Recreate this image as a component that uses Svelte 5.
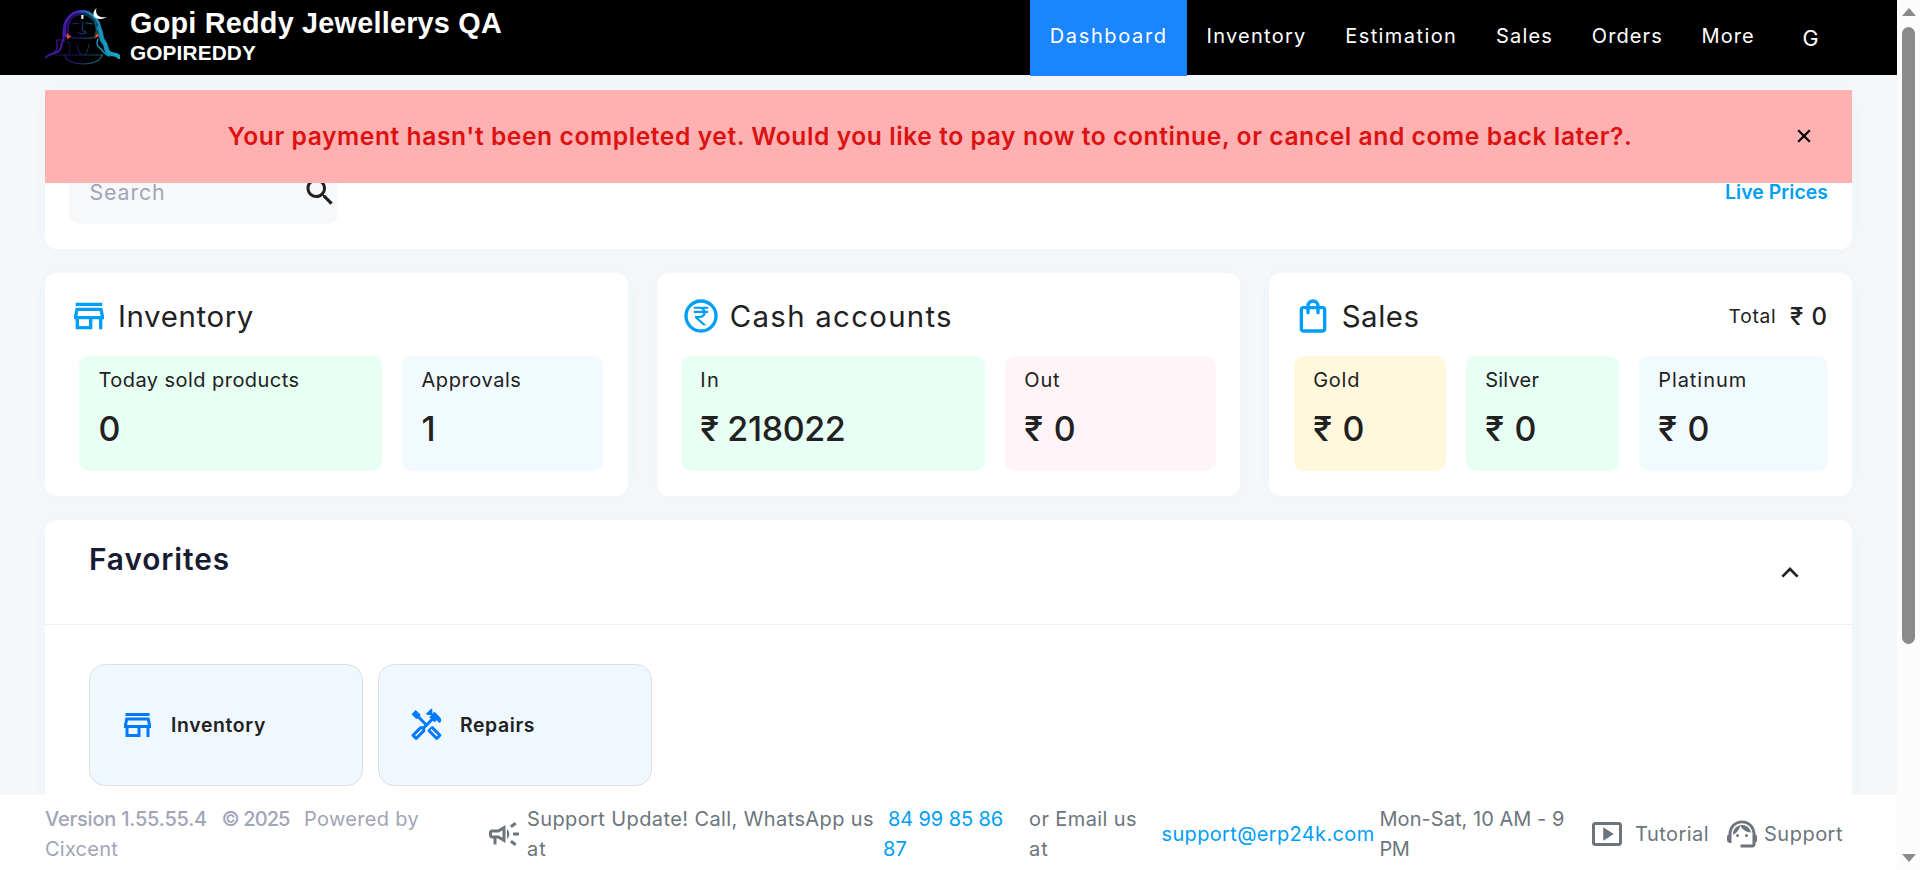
<script>
  const STORE = 'M18.36 9l.6 3H5.04l.6-3h12.72M20 4H4v2h16V4zm0 3H4l-1 5v2h1v6h10v-6h4v6h2v-6h1v-2l-1-5zM6 18v-4h6v4H6z';
  const BAG = 'M18 6h-2c0-2.21-1.79-4-4-4S8 3.79 8 6H6c-1.1 0-2 .9-2 2v12c0 1.1.9 2 2 2h12c1.1 0 2-.9 2-2V8c0-1.1-.9-2-2-2zm-6-2c1.1 0 2 .9 2 2h-4c0-1.1.9-2 2-2zm6 16H6V8h2v2c0 .55.45 1 1 1s1-.45 1-1V8h4v2c0 .55.45 1 1 1s1-.45 1-1V8h2v12z';
  const TOOLS = 'm21.67 18.17-5.3-5.3h-.99l-2.54 2.54v.99l5.3 5.3c.39.39 1.02.39 1.41 0l2.12-2.12c.39-.38.39-1.02 0-1.41zm-2.83 1.42-4.24-4.24.71-.71 4.24 4.24-.71.71zM17.34 10.19l1.41-1.41 2.12 2.12c1.17-1.17 1.17-3.07 0-4.24l-3.54-3.54-1.41 1.41V1.71L15.22 1l-3.54 3.54.71.71h2.83l-1.41 1.41 1.06 1.06-2.89 2.89-4.13-4.13V5.06L4.83 2.04 2 4.87 5.03 7.9h1.41l4.13 4.13-.85.85H7.6l-5.3 5.3c-.39.39-.39 1.02 0 1.41l2.12 2.12c.39.39 1.02.39 1.41 0l5.3-5.3v-2.12l5.15-5.15 1.06 1.05zm-7.98 5.15-4.24 4.24-.71-.71 4.24-4.24.71.71z';
  const RUPEE = 'M13.66 7c-.56-1.18-1.76-2-3.16-2H6V3h12v2h-3.26c.48.58.84 1.26 1.05 2H18v2h-2.02c-.25 2.8-2.61 5-5.48 5h-.73l6.73 7h-2.77L7 14v-2h3.5c1.76 0 3.22-1.3 3.46-3H6V7h7.66z';

  const nav = [
    ['Dashboard', 118],
    ['Inventory', 100],
    ['Estimation', 112],
    ['Sales', 57],
    ['Orders', 71],
    ['More', 53]
  ];

  const cards = [
    {
      icon: 'store', title: 'Inventory', tw: 136, kind: 'inv',
      tiles: [
        { label: 'Today sold products', lw: 201, value: '0', vw: 22, tone: 'green' },
        { label: 'Approvals', lw: 100, value: '1', vw: 15, tone: 'blue' }
      ]
    },
    {
      icon: 'rupee', title: 'Cash accounts', tw: 223, kind: 'cash',
      tiles: [
        { label: 'In', lw: 20, value: '₹ 218022', vw: 145, tone: 'green' },
        { label: 'Out', lw: 36, value: '₹ 0', vw: 52, tone: 'pink' }
      ]
    },
    {
      icon: 'bag', title: 'Sales', tw: 78, kind: 'sales', total: '₹ 0',
      tiles: [
        { label: 'Gold', lw: 47, value: '₹ 0', vw: 52, tone: 'gold' },
        { label: 'Silver', lw: 54, value: '₹ 0', vw: 52, tone: 'green' },
        { label: 'Platinum', lw: 89, value: '₹ 0', vw: 52, tone: 'blue' }
      ]
    }
  ];

  // Tracks a label out so that it fills its designed width.
  function fit(node, width) {
    const n = node.textContent.length;
    const natural = node.getBoundingClientRect().width;
    if (width && n) node.style.letterSpacing = ((width - natural) / n).toFixed(3) + 'px';
  }
</script>

{#snippet t(text, width)}<span class="t" use:fit={width}>{text}</span>{/snippet}

<div class="window">
  <div class="main">
    <header>
      <svg class="logo" viewBox="0 0 75 57" fill="none" stroke-linecap="round">
        <defs>
          <linearGradient id="lg" x1="0" x2="75" y1="0" y2="0" gradientUnits="userSpaceOnUse">
            <stop offset="0" stop-color="#46128a" />
            <stop offset=".4" stop-color="#4420b8" />
            <stop offset=".62" stop-color="#1689b8" />
            <stop offset="1" stop-color="#18a7c6" />
          </linearGradient>
        </defs>
        <g stroke="url(#lg)">
          <g opacity=".45" stroke-width="5">
            <path d="M21 27C19 20 22 12 27 8C32 4 42 4 46 8C53 13 54 19 54 27" />
            <path d="M55 23C58 28 55 32 60 37C63 41 61 44 66 46" />
          </g>
          <path stroke-width="2.6" d="M21 28C17 22 20 12 26 7C32 2 42 2 47 7C54 12 56 19 55 27" />
          <path stroke-width="2" d="M19 22C17 27 20 29 18 33C15 37 18 42 12 44C8 46 4 46 1 49" />
          <path stroke-width="1.2" d="M19 32H12V41L8 46" />
          <path stroke-width="4" d="M54 20C58 26 54 29 59 34C63 38 59 42 64 45C68 48 71 45 74 49" />
          <path stroke-width="1.5" d="M53 31C50 38 54 39 57 42C59 46 61 46 64 48" />
          <path stroke-width="1" opacity=".7" d="M24 14C23 20 23 28 28 30H47C52 28 52 20 50 14M27 16l7-1M41 15l7 1M38 14l-1 8 4 2M33 25q4 2 8 0" />
          <path stroke-width="1" opacity=".5" d="M19 34h5l1 6-1 7M32 37q1 6 4 10M44 37q-1 6-4 10M10 47H58" />
          <path stroke-width="1.2" opacity=".7" d="M20 47C21 59 55 59 57 47" />
        </g>
        <path fill="#f2501c" d="M22 25l4 4-4 2zM52 25l2 3-5 3z" />
        <path fill="#fff" d="M36.4 7h2v4h-2zM51.5 0C44 7 51 15 62 9C55 10.500 49.500 7 51.500 0z" />
      </svg>
      <div class="brand">
        <strong>{@render t('Gopi Reddy Jewellerys QA', 372)}</strong>
        <small>{@render t('GOPIREDDY', 126)}</small>
      </div>
      <nav>
        {#each nav as [name, w], i}
          <a class:active={i === 0}>{@render t(name, w)}</a>
        {/each}
        <a class="user">G</a>
      </nav>
    </header>

    <div class="content">
      <div class="alert">
        <p>{@render t("Your payment hasn't been completed yet. Would you like to pay now to continue, or cancel and come back later?.", 1405)}</p>
        <svg class="close" viewBox="0 0 14 14"><path d="M1.2 1.2l11.6 11.6M12.8 1.2L1.2 12.8" stroke="#000" stroke-width="2.2" /></svg>
      </div>

      <section class="card toolbar">
        <div class="search">
          <span>{@render t('Search', 76)}</span>
          <svg viewBox="0 0 24 24"><path d="M15.5 14h-.79l-.28-.27C15.41 12.59 16 11.11 16 9.5 16 5.91 13.09 3 9.5 3S3 5.91 3 9.5 5.91 16 9.5 16c1.61 0 3.09-.59 4.23-1.57l.27.28v.79l5 4.99L20.49 19l-4.99-5zm-6 0C7.01 14 5 11.99 5 9.5S7.01 5 9.5 5 14 7.01 14 9.5 11.99 14 9.5 14z" /></svg>
        </div>
        <a class="live">{@render t('Live Prices', 103)}</a>
      </section>

      <div class="cards">
        {#each cards as card}
          <section class="card stat {card.kind}">
            <div class="head">
              <svg viewBox="0 0 24 24">
                {#if card.icon === 'store'}
                  <path d={STORE} />
                {:else if card.icon === 'bag'}
                  <path d={BAG} />
                {:else}
                  <circle cx="12" cy="12" r="9" fill="none" stroke="currentColor" stroke-width="2" />
                  <path transform="translate(3.36 4.56) scale(.72 .62)" d={RUPEE} />
                {/if}
              </svg>
              <h2>{@render t(card.title, card.tw)}</h2>
              {#if card.total}
                <div class="total"><span>{@render t('Total', 48)}</span><b>{@render t(card.total, 38)}</b></div>
              {/if}
            </div>
            <div class="tiles">
              {#each card.tiles as tile}
                <div class="tile {tile.tone}">
                  <span>{@render t(tile.label, tile.lw)}</span>
                  <b>{@render t(tile.value, tile.vw)}</b>
                </div>
              {/each}
            </div>
          </section>
        {/each}
      </div>

      <section class="card favorites">
        <div class="fav-head">
          <h3>{@render t('Favorites', 141)}</h3>
          <svg viewBox="0 0 18 11"><path d="M1.4 9.6L9 2l7.6 7.6" fill="none" stroke="#212121" stroke-width="2.7" /></svg>
        </div>
        <div class="shortcuts">
          <a><svg viewBox="0 0 24 24"><path d={STORE} /></svg>{@render t('Inventory', 95)}</a>
          <a><svg viewBox="0 0 24 24"><path d={TOOLS} /></svg>{@render t('Repairs', 75)}</a>
        </div>
      </section>
    </div>

    <footer>
      <div class="version">
        <div><b>{@render t('Version 1.55.55.4', 162)}</b><b>{@render t('© 2025', 68)}</b><span>{@render t('Powered by', 115)}</span></div>
        <div>{@render t('Cixcent', 73)}</div>
      </div>
      <svg class="horn" viewBox="0 0 24 24"><path d="M18 11v2h4v-2h-4zm-2 6.61c.96.71 2.21 1.65 3.2 2.39.4-.53.8-1.07 1.2-1.6-.99-.74-2.24-1.68-3.2-2.4-.4.54-.8 1.08-1.2 1.61zM20.4 5.6c-.4-.53-.8-1.07-1.2-1.6-.99.74-2.24 1.68-3.2 2.4.4.53.8 1.07 1.2 1.6.96-.72 2.21-1.65 3.2-2.4zM4 9c-1.1 0-2 .9-2 2v2c0 1.1.9 2 2 2h1v4h2v-4h1l5 3V6L8 9H4zm5.03 1.71L11 9.53v4.94l-1.97-1.18-.48-.29H4v-2h4.55l.48-.29zM15.5 12c0-1.33-.58-2.53-1.5-3.35v6.69c.92-.81 1.5-2.01 1.5-3.34z" /></svg>
      <div class="update"><div>{@render t('Support Update! Call, WhatsApp us', 347)}</div><div>{@render t('at', 20)}</div></div>
      <div class="phone"><div>{@render t('84 99 85 86', 115)}</div><div>{@render t('87', 24)}</div></div>
      <div class="or"><div>{@render t('or Email us', 108)}</div><div>{@render t('at', 20)}</div></div>
      <div class="mail">{@render t('support@erp24k.com', 213)}</div>
      <div class="hours"><div>{@render t('Mon-Sat, 10 AM - 9', 185)}</div><div>{@render t('PM', 30)}</div></div>
      <svg class="play" viewBox="0 0 24 24"><path d="M9.5 7.5v9l7-4.5zM20 4H4c-1.1 0-2 .9-2 2v12c0 1.1.9 2 2 2h16c1.1 0 2-.9 2-2V6c0-1.1-.9-2-2-2zm0 14.01H4V5.99h16v12.02z" /></svg>
      <div class="tutorial">{@render t('Tutorial', 74)}</div>
      <svg class="agent" viewBox="0 0 24 24"><path d="M21 12.22C21 6.73 16.74 3 12 3c-4.69 0-9 3.65-9 9.28-.6.34-1 .98-1 1.72v2c0 1.1.9 2 2 2h1v-6.1c0-3.87 3.13-7 7-7s7 3.13 7 7V19h-8v2h8c1.1 0 2-.9 2-2v-1.22c.59-.31 1-.92 1-1.64v-2.3c0-.7-.41-1.31-1-1.62z" /><circle cx="9" cy="13" r="1" /><circle cx="15" cy="13" r="1" /><path d="M18 11.03C17.52 8.18 15.04 6 12.05 6c-3.03 0-6.29 2.51-6.03 6.45 2.47-1.01 4.33-3.21 4.86-5.89 1.31 2.63 4 4.44 7.12 4.47z" /></svg>
      <div class="support">{@render t('Support', 79)}</div>
    </footer>
  </div>

  <div class="scrollbar">
    <i class="up"></i>
    <i class="thumb"></i>
    <i class="down"></i>
  </div>
</div>

<style>
  :global(body) { margin: 0; overflow: hidden; }
  * { box-sizing: border-box; }
  .window { display: flex; width: 1920px; height: 870px; overflow: hidden; font: 400 20px/30px Inter, 'Open Sans', sans-serif; color: #212121; }
  .main { position: relative; width: 1897px; height: 870px; overflow: hidden; background: #f4f8fb; }
  .t { display: inline-block; white-space: nowrap; }
  svg { display: block; flex: none; fill: currentColor; }
  h2, h3, p { margin: 0; }

  header { display: flex; height: 75px; padding-left: 45px; background: #000; color: #fff; }
  .logo { width: 75px; height: 57px; margin-top: 8px; fill: none; }
  .brand { display: flex; flex-direction: column; margin-left: 10px; padding-top: 7px; font-family: 'Liberation Sans', Arial, sans-serif; }
  .brand strong { font-size: 28.8px; line-height: 32px; }
  .brand small { font-size: 20.8px; line-height: 27px; font-weight: 700; }
  nav { display: flex; margin-left: auto; margin-right: 56px; }
  nav a { height: 76px; padding: 0 19.4px; line-height: 73px; }
  nav a.active { background: #1b84ff; }
  nav a.user { width: 67px; padding: 0 0 0 28.5px; line-height: 77px; font-size: 21.5px; }

  .content { position: relative; padding: 15px 45px 0; }
  .alert { position: absolute; z-index: 2; top: 15px; left: 45px; display: flex; align-items: center; width: 1807px; height: 93px; padding-left: 182.5px; background: #ffb0b0; color: #dc1212; }
  .alert p { margin-bottom: 1px; font-size: 24.6px; font-weight: 600; }
  .alert .close { width: 14px; height: 14px; margin-left: auto; margin-right: 41px; margin-bottom: 1px; }

  .card { background: #fff; border-radius: 12px; box-shadow: 0 0 20px rgba(76, 87, 125, .03); }
  .toolbar { display: flex; align-items: flex-end; justify-content: space-between; height: 159px; padding: 0 24px 25px; }
  .search { display: flex; align-items: center; justify-content: space-between; width: 269px; height: 62px; padding: 0 0 0 20.5px; border-radius: 10px; background: #f6f8fa; }
  .search span { margin-bottom: 1px; color: #a1a5b7; font-size: 21.4px; }
  .search svg { width: 36px; height: 36px; margin-bottom: 2px; }
  .live { color: #009ef7; font-weight: 600; padding-bottom: 17px; font-size: 19.4px; }

  .cards { display: grid; grid-template-columns: repeat(3, 1fr); gap: 28.5px; margin: 24px 0; }
  .stat { height: 223px; padding: 23px 24px 0; }
  .head { display: flex; align-items: center; height: 40px; }
  .head svg { width: 40px; height: 40px; color: #009ef7; }
  .head h2 { margin-left: 9px; padding-top: 2px; font-size: 29.4px; font-weight: 400; line-height: 38px; }
  .total { display: flex; align-items: center; gap: 13.5px; margin-left: auto; font-size: 19.2px; }
  .total b { padding-top: 1px; font-size: 24px; font-weight: 500; }
  .tiles { display: grid; column-gap: 20px; margin-top: 20px; }
  .inv .tiles { grid-template-columns: 303px 201px; margin-left: 10px; }
  .cash .tiles { grid-template-columns: 304px 211px; }
  .sales .tiles { grid-template-columns: 152px 153px 189px; margin-left: 1px; }
  .tile { display: flex; flex-direction: column; height: 115px; padding: 9px 0 0 19.5px; border-radius: 10px; }
  .tile span { line-height: 30px; }
  .tile b { margin-top: 14px; font-size: 34px; font-weight: 500; line-height: 40px; }
  .green { background: #e8fff3; }
  .blue { background: #f1faff; }
  .pink { background: #fff5f8; }
  .gold { background: #fff8dd; }

  .favorites { height: 400px; }
  .fav-head { display: flex; justify-content: space-between; height: 105px; padding: 23px 53px 0 44px; border-bottom: 1px solid #eff0f2; }
  .fav-head h3 { color: #181c32; font-size: 29.8px; font-weight: 600; line-height: 32px; }
  .fav-head svg { width: 18px; height: 11px; margin-top: 24px; }
  .shortcuts { display: flex; gap: 15px; padding: 39px 44px; }
  .shortcuts a { display: flex; align-items: center; gap: 15px; width: 274px; height: 122px; padding: 0 0 1px 29px; border: 1px solid #dedfe2; border-radius: 16px; background: #eff7ff; font-weight: 600; font-size: 19.4px; }
  .shortcuts svg { width: 37px; height: 36px; color: #007bff; }

  footer { position: absolute; z-index: 3; left: 0; right: 0; bottom: 0; display: flex; align-items: center; height: 75px; padding: 3px 0 0 45px; background: #fff; color: #6c757d; }
  .version { width: 441px; color: #a1a5b7; }
  .version > div:first-child { display: flex; gap: 14.5px; }
  .version b { font-weight: 500; }
  footer svg { width: 36px; height: 36px; }
  .update { width: 356px; margin-left: 5px; }
  .phone { width: 146px; color: #009ef7; }
  .phone > div:first-child { padding-left: 5px; }
  .or { width: 132.5px; }
  .mail { width: 218px; color: #009ef7; }
  .hours { width: 209.5px; }
  .tutorial { width: 89px; margin-left: 10px; }
  .support { margin-left: 4px; }

  .scrollbar { display: flex; flex-direction: column; align-items: center; width: 23px; padding: 8px 0; background: #fcfcfc; }
  .scrollbar i { display: block; }
  .up { border: solid transparent; border-width: 0 7.5px 8px; border-bottom-color: #8a8a8a; }
  .thumb { width: 13px; height: 617px; margin-top: 11px; border-radius: 7px; background: #8a8a8a; }
  .down { margin-top: auto; border: solid transparent; border-width: 8px 7.5px 0; border-top-color: #8a8a8a; }
</style>
